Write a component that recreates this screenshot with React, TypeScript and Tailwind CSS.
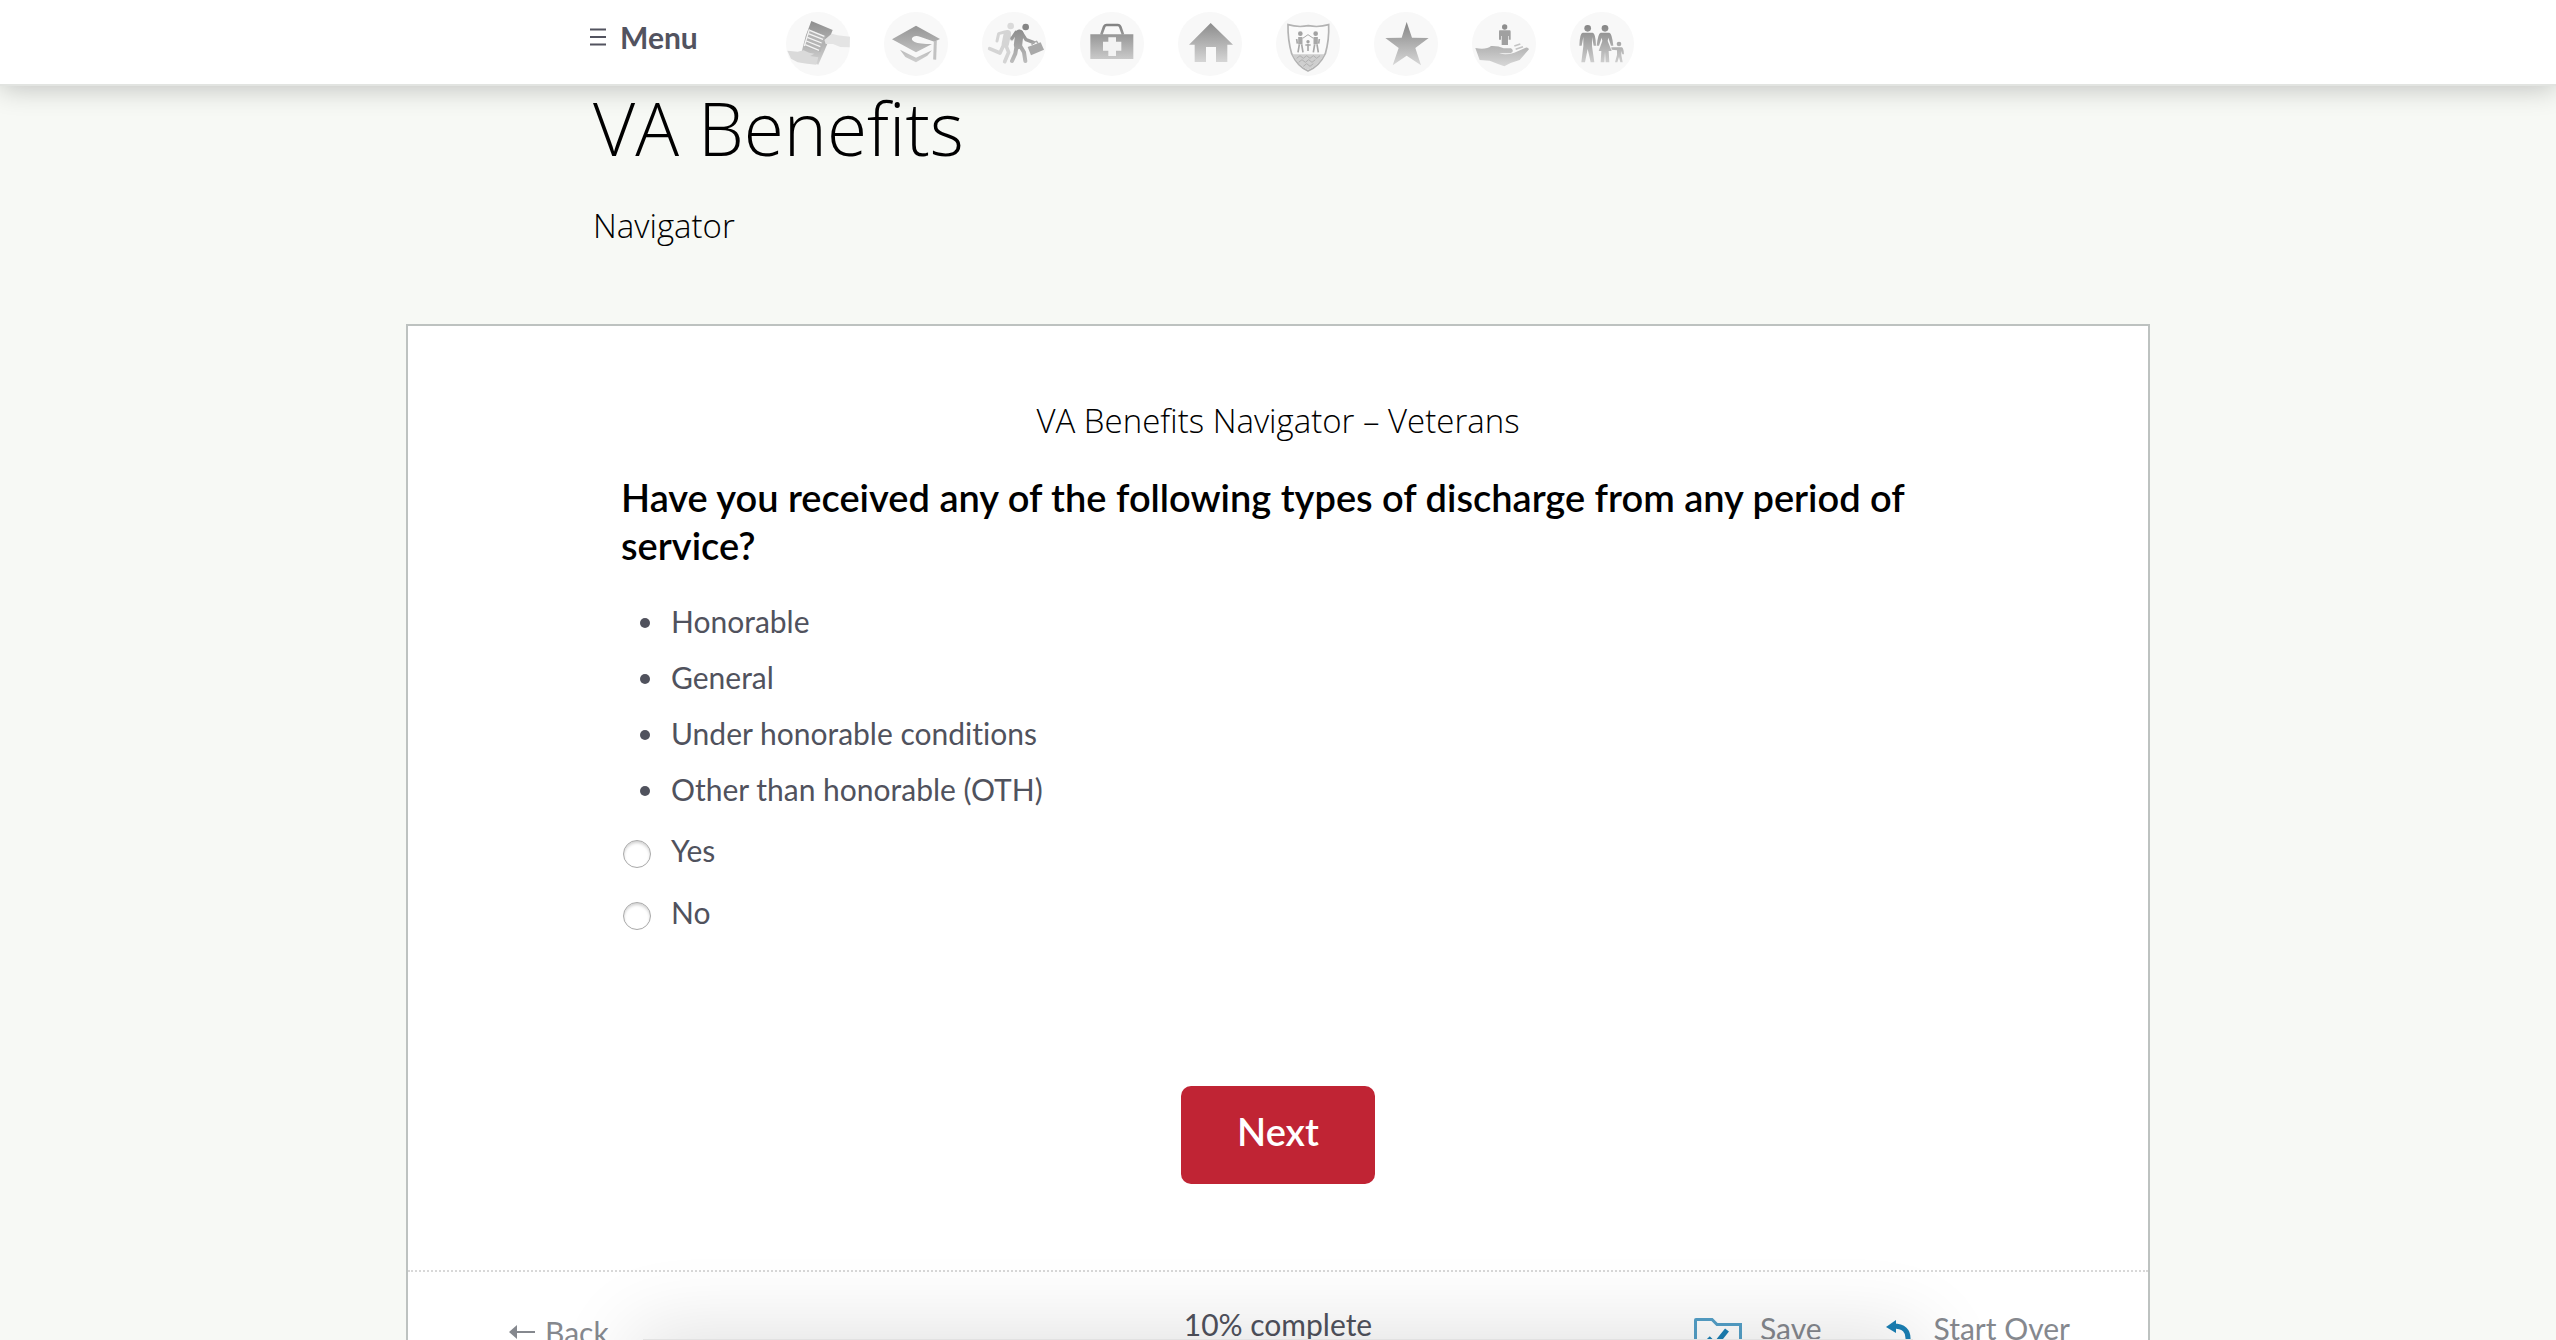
import { useState } from 'react';
import type { ReactNode } from 'react';

function Disc({ viewBox, cx, cy, children }: { viewBox: string; cx: number; cy: number; children: ReactNode }) {
  return (
    <svg viewBox={viewBox} className="size-16" aria-hidden="true">
      <circle cx={cx} cy={cy} r="96" fill="#f8f8f8" />
      {children}
    </svg>
  );
}

function Gradient({ id, y1, y2, from = '#969696', to = '#cfcfcf' }: { id: string; y1: number; y2: number; from?: string; to?: string }) {
  return (
    <defs>
      <linearGradient id={id} gradientUnits="userSpaceOnUse" x1="0" x2="0" y1={y1} y2={y2}>
        <stop offset="0" stopColor={from} />
        <stop offset="1" stopColor={to} />
      </linearGradient>
    </defs>
  );
}

const topics: { label: string; icon: ReactNode }[] = [
  {
    label: 'Claims',
    icon: (
      <Disc viewBox="49 32 192 192" cx={145} cy={128}>
        <Gradient id="g-claims" y1={60} y2={188} from="#8f8f8f" to="#d2d2d2" />
        <path d="M125 59L189 86L172 130L146 190L92 168L108 104Z" fill="url(#g-claims)" />
        <path d="M119 84L168 104L152 152L105 136Z" fill="#b4b4b4" />
        <g stroke="#f4f4f4" strokeWidth="4" fill="none">
          <path d="M120 87L164 105M116 97L160 114M113 108L156 125M110 119L152 136M107 130L148 147" />
          <path d="M119 84L104 134" />
        </g>
        <path d="M164 116L186 97L204 102L241 106L240 138L212 137L190 128L168 128Z" fill="#e4e4e4" />
        <path d="M53 148L84 151L102 147L118 154L134 157L122 164L146 168L140 190L112 187L84 183L64 172Z" fill="#dadada" />
      </Disc>
    ),
  },
  {
    label: 'Education',
    icon: (
      <Disc viewBox="344 33 192 192" cx={440} cy={129}>
        <Gradient id="g-edu" y1={75} y2={184} />
        <path d="M368 115L440 74L512 114L495 122L452 107Q440 103 431 108Q422 116 436 123Q450 129 488 129L440 154Z" fill="url(#g-edu)" />
        <path d="M392 146L440 170L488 148L474 164L440 184L408 168Z" fill="url(#g-edu)" />
        <path d="M498 120L496 176" stroke="#c2c2c2" strokeWidth="9" fill="none" />
      </Disc>
    ),
  },
  {
    label: 'Careers',
    icon: (
      <Disc viewBox="636 33 192 192" cx={732} cy={129}>
        <Gradient id="g-job" y1={68} y2={186} from="#858585" to="#bdbdbd" />
        <g stroke="#d4d4d4" fill="none" strokeLinecap="round" strokeLinejoin="round">
          <path d="M712 98L706 128" strokeWidth="22" />
          <path d="M704 93L686 98L681 120M714 102L726 116" strokeWidth="9" />
          <path d="M700 134L690 156L659 143M708 134L716 154L704 182" strokeWidth="11" />
        </g>
        <circle cx="722" cy="75" r="10" fill="#dadada" />
        <g stroke="url(#g-job)" fill="none" strokeLinecap="round" strokeLinejoin="round">
          <path d="M748 98L744 132" strokeWidth="25" />
          <path d="M738 94L726 112M754 94L768 116L790 124" strokeWidth="10" />
          <path d="M740 134L736 158L726 180M750 134L762 154L766 180" strokeWidth="12" />
        </g>
        <circle cx="767" cy="78" r="10" fill="#858585" />
        <path d="M773 138L812 124L822 146L783 163Z" fill="#a9a9a9" />
        <path d="M786 132L787 126L800 121L804 127" stroke="#a9a9a9" strokeWidth="4" fill="none" />
      </Disc>
    ),
  },
  {
    label: 'Health',
    icon: (
      <Disc viewBox="61 35 192 192" cx={157} cy={131}>
        <Gradient id="g-health" y1={68} y2={178} from="#7f7f7f" to="#cbcbcb" />
        <path d="M92 102H221V176H92Z" fill="url(#g-health)" />
        <path d="M125 103L133 80Q135 74 141 74H174Q180 74 182 80L190 103" stroke="url(#g-health)" strokeWidth="8" fill="none" />
        <path d="M146 111H169V124H185V151H169V167H146V151H130V124H146Z" fill="#f3f3f3" />
      </Disc>
    ),
  },
  {
    label: 'Housing',
    icon: (
      <Disc viewBox="354 35 192 192" cx={450} cy={131}>
        <Gradient id="g-home" y1={68} y2={186} from="#8c8c8c" to="#d6d6d6" />
        <path d="M452 68L519 133H502V185H468V140H438V185H404V133H387Z" fill="url(#g-home)" />
      </Disc>
    ),
  },
  {
    label: 'Insurance',
    icon: (
      <Disc viewBox="650 37 192 192" cx={746} cy={133}>
        <path d="M686 75Q716 84 747 78Q778 84 808 75Q810 120 798 162Q780 200 746 214Q714 200 697 162Q685 120 686 75Z" fill="#fafafa" stroke="#b3b3b3" strokeWidth="5" />
        <path d="M699 164H795Q778 198 746 211Q716 198 699 164Z" fill="#cfcfcf" />
        <path d="M712 176L722 168L732 176L742 168L752 176L762 168L772 176L782 168M718 188L728 180L738 188L748 180L758 188L768 180M732 200L742 192L752 200L762 192" stroke="#b0b0b0" strokeWidth="3" fill="none" />
        <g fill="#a2a2a2">
          <circle cx="723" cy="102" r="7" />
          <circle cx="769" cy="102" r="7" />
          <circle cx="746" cy="126" r="5" />
        </g>
        <g stroke="#a8a8a8" fill="none" strokeLinejoin="round">
          <path d="M723 112V134M769 112V134" strokeWidth="13" />
          <path d="M720 134L716 158M727 134L731 158M766 134L762 158M773 134L777 158M712 118L714 132M780 118L778 132" strokeWidth="5" />
          <path d="M730 116L746 105L762 116" strokeWidth="3" />
          <path d="M746 132V154M738 136H754" strokeWidth="5" />
        </g>
      </Disc>
    ),
  },
  {
    label: 'Memorials',
    icon: (
      <Disc viewBox="72 38 192 192" cx={168} cy={134}>
        <Gradient id="g-star" y1={68} y2={198} from="#858585" to="#d8d8d8" />
        <path d="M170 68L186 115L236 116L196 146L213 198L170 169L128 198L146 146L106 116L155 115Z" fill="url(#g-star)" />
      </Disc>
    ),
  },
  {
    label: 'Support',
    icon: (
      <Disc viewBox="367 38 192 192" cx={463} cy={134}>
        <Gradient id="g-care" y1={140} y2={202} from="#b2b2b2" to="#d8d8d8" />
        <circle cx="465" cy="83" r="8" fill="#8e8e8e" />
        <path d="M450 93H480Q483 93 483 97V121H477V110H475V137H456V110H454V121H448V97Q448 93 450 93Z" fill="#a0a0a0" />
        <path d="M377 146Q410 152 424 140Q446 139 462 147H484Q496 156 482 162H448Q470 168 494 160L528 145Q536 144 538 150L510 182Q486 188 464 201Q440 192 420 184L390 182Z" fill="url(#g-care)" />
        <path d="M494 140L512 134M498 150L520 142" stroke="#c4c4c4" strokeWidth="5" />
      </Disc>
    ),
  },
  {
    label: 'Family',
    icon: (
      <Disc viewBox="661 39 192 192" cx={757} cy={135}>
        <Gradient id="g-fam" y1={78} y2={192} from="#858585" to="#cfcfcf" />
        <g fill="url(#g-fam)">
          <circle cx="714" cy="88" r="10" />
          <circle cx="766" cy="88" r="10" />
          <path d="M699 101H729Q738 103 739 140H732L727 114V142L734 190H723L714 150L706 190H695L701 142V114L696 140H689Q690 103 699 101Z" />
          <path d="M753 101H779Q787 103 791 140H784L776 116L774 126L786 156H777L779 190H768L766 158L764 190H753L755 156H747L758 126L756 116L748 140H741Q745 103 753 101Z" />
          <circle cx="808" cy="135" r="7" />
          <path d="M785 145H816Q822 146 823 166H818L815 156V168L819 190H812L808 174L803 190H796L802 168V154L786 152Z" />
        </g>
      </Disc>
    ),
  },
];

const dischargeTypes = ['Honorable', 'General', 'Under honorable conditions', 'Other than honorable (OTH)'];

function Header() {
  return (
    <header className="relative z-10 border-b-2 border-[#e2e4e1] bg-white shadow-[0_2px_28px_rgba(0,0,0,0.24)]">
      <div className="mx-auto flex h-[84px] max-w-[1376px] items-center gap-[88px]">
        <button type="button" className="flex items-center gap-3.5 pb-2.5 text-[30px] leading-9 font-bold text-[#52535f]">
          <svg viewBox="0 0 16 18" className="h-[18px] w-4" aria-hidden="true">
            <path d="M0 1.5H16M0 9H16M0 16.5H16" stroke="#52535f" strokeWidth="2.2" />
          </svg>
          Menu
        </button>
        <nav aria-label="Benefit topics" className="flex gap-[34px] pt-1">
          {topics.map((t) => (
            <a key={t.label} href="#" aria-label={t.label}>
              {t.icon}
            </a>
          ))}
        </nav>
      </div>
    </header>
  );
}

export default function App() {
  const [answer, setAnswer] = useState('');

  return (
    <div className="relative h-screen overflow-hidden bg-[#f7f9f5] font-['Lato',sans-serif] text-[#50525d]">
      <Header />
      <main>
        <div className="mx-auto max-w-[1370px] font-['Open_Sans',sans-serif] font-light text-black">
          <h1 className="text-[73px] leading-[84px]">VA Benefits</h1>
          <p className="mt-9 text-[33px] leading-10">Navigator</p>
        </div>

        <section className="mx-auto mt-[78px] max-w-[1744px] border-2 border-[#bdc2c0] bg-white">
          <form className="mx-auto max-w-[1314px] pt-[75px] pb-[86px]" onSubmit={(e) => e.preventDefault()}>
            <h2 className="text-center font-['Open_Sans',sans-serif] text-[33px] leading-10 font-light text-black">
              VA Benefits Navigator – Veterans
            </h2>
            <fieldset className="mt-8">
              <legend className="text-[38px] leading-[48px] font-semibold text-black">
                Have you received any of the following types of discharge from any period of service?
              </legend>
              <ul className="mt-6 mb-0.5 list-disc pl-[46px] text-[30px] leading-[56px] [font-variant-ligatures:no-common-ligatures]">
                {dischargeTypes.map((d) => (
                  <li key={d} className="pl-1">
                    {d}
                  </li>
                ))}
              </ul>
              {['Yes', 'No'].map((v) => (
                <label key={v} className="flex items-center gap-5 pl-0.5 text-[30px] leading-[62px]">
                  <input
                    type="radio"
                    name="discharge"
                    value={v}
                    checked={answer === v}
                    onChange={() => setAnswer(v)}
                    className="mt-2 size-7 appearance-none rounded-full border border-[#a9a9a9] bg-white shadow-[inset_0_2px_3px_rgba(0,0,0,0.18)] checked:border-8 checked:border-[#c02434]"
                  />
                  {v}
                </label>
              ))}
            </fieldset>
            <div className="mt-[143px] flex justify-center">
              <button type="submit" className="h-[98px] w-[194px] rounded-[10px] bg-[#c02434] pb-2 text-[38px] leading-[48px] font-semibold text-white">
                Next
              </button>
            </div>
          </form>

          <footer className="grid grid-cols-3 items-start border-t-2 border-dotted border-[#d8d8d8] px-[78px] pb-10 text-[30px] leading-10">
            <a href="#" className="flex items-center gap-2.5 justify-self-start pt-10 pl-[23px] text-[#85888e]">
              <svg viewBox="0 0 26 14" className="h-3.5 w-[26px]" aria-hidden="true">
                <path d="M0 7L8 0V6H26V8H8V14Z" fill="#85888e" />
              </svg>
              Back
            </a>
            <p className="justify-self-center pt-8">10% complete</p>
            <div className="flex items-start justify-end gap-[60px] pt-9 text-[#85888e]">
              <a href="#" className="flex items-start gap-[18px]">
                <svg viewBox="0 0 48 40" className="mt-2.5 h-10 w-12" fill="none" stroke="#1b80b5" aria-hidden="true">
                  <path d="M1.5 38V2Q1.5 1.5 2 1.5H18L23 6.5H46.5V38Z" strokeWidth="3" strokeOpacity="0.75" />
                  <path d="M14 20L21 27L33 12" strokeWidth="5" />
                </svg>
                Save
              </a>
              <a href="#" className="flex items-start gap-[22px]">
                <svg viewBox="0 0 30 40" className="mt-3 h-10 w-[30px]" aria-hidden="true">
                  <path d="M11 6Q27 6 26 20Q25 34 12 34Q3 33 1 20" fill="none" stroke="#1b80b5" strokeWidth="5" />
                  <path d="M4 7L14 0V13Z" fill="#1b80b5" />
                </svg>
                Start Over
              </a>
            </div>
          </footer>
        </section>
      </main>
      <div className="pointer-events-none absolute inset-x-0 top-[calc(100%-1px)] flex justify-center">
        <div className="h-40 w-full max-w-[1270px] bg-[#e2e2e2] shadow-[0_0_80px_10px_rgba(0,0,0,0.12)]" />
      </div>
    </div>
  );
}
